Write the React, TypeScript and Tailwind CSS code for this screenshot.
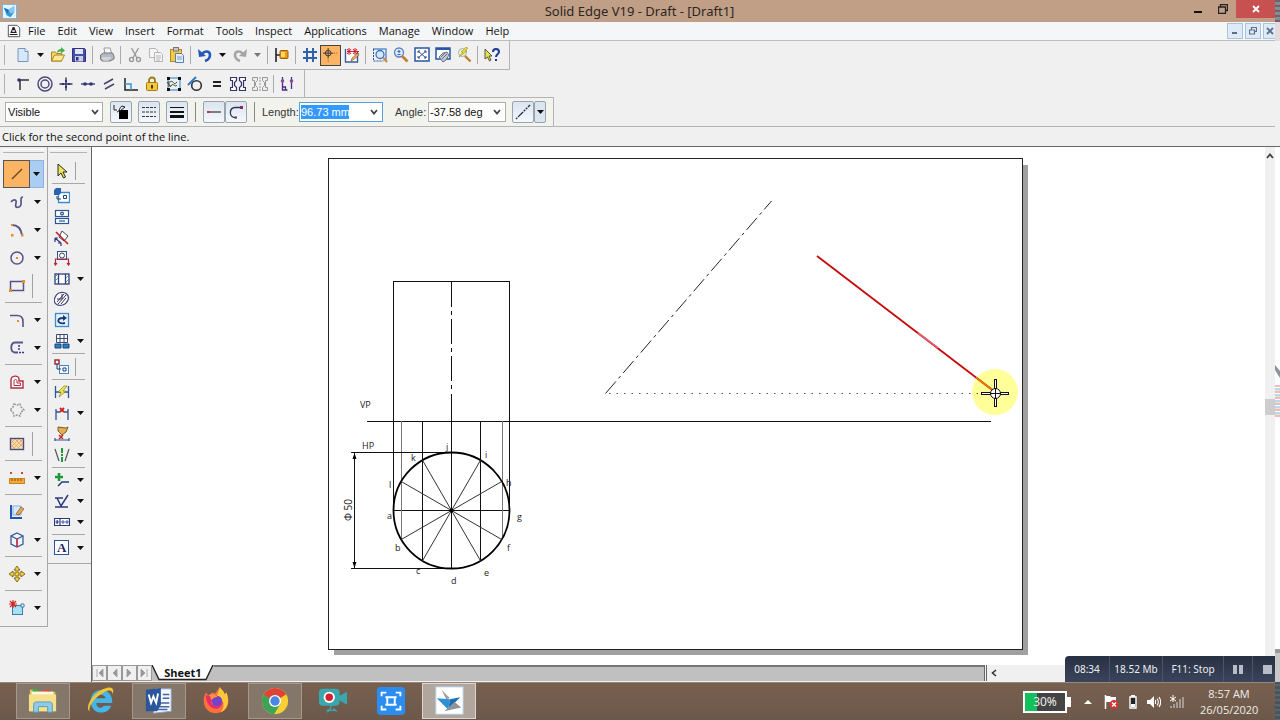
import React from 'react';
import clsx from 'clsx';

const svgs: Record<string, React.ReactNode> = {
  app: (
    <>
      <rect x="0.5" y="0.5" width="15" height="15" fill="#e4f3fc" stroke="#7db4dc" />
      <path d="M2 4l5 2 6-4v7l-4 5-4-2z" fill="#2f9ad8" />
      <path d="M7 6l6-4v7l-4 1z" fill="#8ac9ee" />
      <path d="M2 4l5 2-1 4z" fill="#1873b8" />
    </>
  ),
  draft: (
    <>
      <path d="M1.5 1.5h10l3 3v10h-13z" fill="#fff" stroke="#444" />
      <path d="M3 12h9M4 9.5h7M7.5 4v3M5 9l2-5h1l2 5" fill="none" stroke="#222" strokeWidth="1.3" />
    </>
  ),
  new: (
    <>
      <path d="M3 1.5h7l3 3v10H3z" fill="#d6e8fb" stroke="#7a93b8" />
      <path d="M10 1.5v3h3" fill="#fff" stroke="#7a93b8" />
    </>
  ),
  open: (
    <>
      <path d="M1.5 14V5h4l1 1.5h5V14z" fill="#f7d96b" stroke="#a98425" />
      <path d="M1.5 14l3-6h10l-3 6z" fill="#fde98f" stroke="#a98425" />
      <path d="M7 6c0-3 2-4 4-4V0l4 3.5-4 3v-2c-2 0-3 .5-4 1.5z" fill="#46b04a" />
    </>
  ),
  save: (
    <>
      <path d="M1.5 1.5h12l1 1v12h-13z" fill="#4a4ea8" stroke="#2f3280" />
      <rect x="4" y="2" width="8" height="5" fill="#dfe6f5" />
      <rect x="4" y="9" width="8" height="5.5" fill="#c9d0e4" />
      <rect x="5" y="10" width="2.5" height="3.5" fill="#2f3280" />
    </>
  ),
  print: (
    <>
      <path d="M5 1h6l2 6H6z" fill="#f8f8f8" stroke="#999" />
      <path d="M1.5 8l3-2h9l1.5 3v3l-4 2H3l-1.5-2z" fill="#b4bac4" stroke="#777" />
      <path d="M3 11h9M4 13h6" stroke="#eee" />
    </>
  ),
  cut: (
    <g fill="none" stroke="#9a9a9a" strokeWidth="1.4">
      <path d="M4.5 1l5.5 10M11.5 1L6 11" />
      <circle cx="4.5" cy="12.5" r="2" />
      <circle cx="11.5" cy="12.5" r="2" />
    </g>
  ),
  copy: (
    <g fill="#f7f7f7" stroke="#b5b5b5">
      <path d="M1.5 1.5h6l2 2v7h-8z" />
      <path d="M6.5 5.5h6l2 2v7h-8z" />
      <path d="M8 9h5M8 11h5M8 13h4" />
    </g>
  ),
  paste: (
    <>
      <rect x="1.5" y="2.5" width="11" height="12" fill="#f6c945" stroke="#b58a1c" />
      <rect x="4.5" y="0.5" width="5" height="3.5" fill="#c8c8c8" stroke="#777" />
      <path d="M6.5 6.5h6l2 2v7h-8z" fill="#e4effb" stroke="#5b7fae" />
      <path d="M8 10h5M8 12h5" stroke="#7c9fca" />
    </>
  ),
  undo: (
    <>
      <path d="M5 7c3-4 8-3 8 1 0 3-2 5-5 6" fill="none" stroke="#2358b8" strokeWidth="2.6" />
      <path d="M1 2l1 8 7-1z" fill="#2358b8" />
    </>
  ),
  redo: (
    <>
      <path d="M11 7C8 3 3 4 3 8c0 3 2 5 5 6" fill="none" stroke="#a5a5a5" strokeWidth="2.6" />
      <path d="M15 2l-1 8-7-1z" fill="#a5a5a5" />
    </>
  ),
  part: (
    <>
      <path d="M2 1v14M2 8h5" stroke="#222" strokeWidth="1.6" />
      <rect x="6" y="3.5" width="8" height="8" rx="1" fill="#f09a10" stroke="#9c5f08" />
      <path d="M7 5h4v5H7z" fill="#ffd76a" />
    </>
  ),
  grid: <path d="M5 1v14M11 1v14M1 5h14M1 11h14" stroke="#2f62a8" strokeWidth="2" />,
  snap: (
    <>
      <circle cx="5.5" cy="5.5" r="3" fill="none" stroke="#333" />
      <path d="M5.5 0v11M0 5.5h11" stroke="#333" />
      <path d="M12 5.5h4M5.5 12v4" stroke="#d33" strokeDasharray="1 1" />
    </>
  ),
  relate: (
    <>
      <path d="M1.5 2v13h12V5" fill="#fff" stroke="#39599c" strokeWidth="1.4" />
      <path d="M3 4.5h12M5 1v7M11 1v7M3 2l4 5M7 2L3 7M9 2l4 5M13 2L9 7" stroke="#d02030" />
      <path d="M7 14l1-3 6-5 1 2-6 5z" fill="#f0b060" stroke="#7a4a10" strokeWidth=".6" />
    </>
  ),
  zoomArea: (
    <>
      <path d="M1 2h13v11" fill="none" stroke="#5b8fcf" strokeWidth="1.5" />
      <path d="M1.5 2v12h10" fill="none" stroke="#28509c" strokeDasharray="2 1" />
      <circle cx="8" cy="7.5" r="4" fill="#d3e8fb" stroke="#3d6fb8" strokeWidth="1.3" />
      <path d="M11 10.5l4 4.5" stroke="#c98a4a" strokeWidth="2.2" />
    </>
  ),
  zoom: (
    <>
      <circle cx="6" cy="5.5" r="4.5" fill="#dcebfa" stroke="#5a83be" strokeWidth="1.3" />
      <path d="M6 3v3M4.5 4.5h3M4.5 7.5h3" stroke="#3d62a0" />
      <path d="M9 9l5.5 5.5" stroke="#c08030" strokeWidth="2.6" />
    </>
  ),
  fit: (
    <>
      <rect x="1" y="1" width="14" height="13" fill="#fff" stroke="#2956a5" strokeWidth="1.5" />
      <path d="M4 4l8 7M12 4l-8 7M4 6V4h2M10 4h2v2M4 9v2h2M10 11h2V9" fill="none" stroke="#2c4f8c" />
    </>
  ),
  pan: (
    <>
      <rect x="1" y="1" width="14" height="11" fill="#fff" stroke="#2956a5" strokeWidth="1.5" />
      <path d="M1 2h14" stroke="#2956a5" strokeWidth="2" />
      <path d="M4 10l4-4 4-1 2 3-3 5-3 2z" fill="#c3c7d4" stroke="#4e5674" strokeWidth=".8" />
      <path d="M6 10l4-4M7 12l5-5" stroke="#4e5674" strokeWidth=".8" />
    </>
  ),
  zoomTool: (
    <>
      <circle cx="6.5" cy="5.5" r="4" fill="#f4f4c8" stroke="#9ab0c8" />
      <path d="M9 9l5.5 5.5" stroke="#c08030" strokeWidth="2.4" />
      <path d="M10 0L5 5h2l-4 5 8-6H9l3-3z" fill="#e8d83c" stroke="#8a8420" strokeWidth=".5" />
    </>
  ),
  help: (
    <>
      <path d="M1 2v10l2.5-2 2 4 1.5-1-2-4h3z" fill="#e8e34a" stroke="#333" strokeWidth=".8" />
      <path d="M9 5c0-4 6-4 6 0 0 2-3 2-3 5M12 12v2" fill="none" stroke="#1c3a94" strokeWidth="2" />
    </>
  ),
  connect: (
    <>
      <path d="M5 14V4h9" fill="none" stroke="#333" strokeWidth="1.5" />
      <circle cx="4" cy="4" r="1.8" fill="#33307a" />
    </>
  ),
  concentric: (
    <g fill="none" stroke="#4d4d78" strokeWidth="1.5">
      <circle cx="8" cy="8" r="7" />
      <circle cx="8" cy="8" r="4" />
    </g>
  ),
  horvert: (
    <>
      <path d="M8 1.5v13M1.5 8h13" stroke="#33335c" strokeWidth="1.4" />
      <path d="M7 4h2v2H7zM7 10h2v2H7zM4 7h2v2H4zM10 7h2v2h-2z" fill="#33307a" />
    </>
  ),
  collinear: (
    <>
      <path d="M1 8h14" stroke="#33335c" strokeWidth="1.3" />
      <circle cx="5" cy="8" r="1.8" fill="#33307a" />
      <circle cx="11" cy="8" r="1.8" fill="#33307a" />
    </>
  ),
  parallel: <path d="M3 8l9-5M4 13l9-5" stroke="#44446a" strokeWidth="1.5" />,
  perpendicular: (
    <>
      <path d="M2 2v12h13" fill="none" stroke="#222" strokeWidth="1.5" />
      <path d="M2 8h6v6" fill="none" stroke="#2e9ad0" strokeWidth="1.5" />
    </>
  ),
  lock: (
    <>
      <path d="M5 7V4.5a3 3 0 016 0V7" fill="none" stroke="#9c7a10" strokeWidth="1.8" />
      <rect x="2.5" y="6.5" width="11" height="8" rx="1" fill="#f3c93a" stroke="#a67c10" />
      <rect x="7" y="9" width="2" height="3.5" fill="#4a3808" />
    </>
  ),
  rigid: (
    <>
      <rect x="2" y="2" width="12" height="12" fill="#e6f2fa" stroke="#3a78b8" />
      <path d="M4 6c4-3 3 5 7 0M5 10c2-4 4 2 6-1M1 6l4 5M3 5v6" fill="none" stroke="#4a4020" />
      <path d="M1 1h3v3H1zM12 1h3v3h-3zM1 12h3v3H1zM12 12h3v3h-3z" fill="#111" />
    </>
  ),
  tangent: (
    <>
      <circle cx="9.5" cy="9.5" r="4.8" fill="none" stroke="#333" strokeWidth="1.6" />
      <path d="M1 9l8-8" stroke="#2a7cc0" strokeWidth="2" />
    </>
  ),
  equal: <path d="M4 6h8M4 10h8" stroke="#222" strokeWidth="2" />,
  symmetric: (
    <path
      d="M.5 1.5h6v3l-2 2v3l2 2v3h-6v-3h2v-7h-2zM15.500 1.500h-6v3l2 2v3l-2 2v3h6v-3h-2v-7h2z"
      fill="#fff"
      stroke="#333366"
      strokeWidth="1.2"
    />
  ),
  symmetricAxis: (
    <>
      <path d="M.5 1.5h5v3l-2 2v3l2 2v3h-5v-3h2v-7h-2zM15.5 1.5h-5v3l2 2v3l-2 2v3h5v-3h-2v-7h2z" fill="#eee" stroke="#999" />
      <path d="M8 1v14" stroke="#999" strokeDasharray="2 1" />
    </>
  ),
  relations: (
    <>
      <path d="M3.5 1v13h5M12.5 1v12M3.5 11h3v3" fill="none" stroke="#4b2a80" strokeWidth="1.3" />
      <circle cx="3.5" cy="5" r="1.8" fill="#8c4a9c" />
      <circle cx="12.5" cy="5" r="1.8" fill="#8c4a9c" />
    </>
  ),
  colour: (
    <>
      <path d="M6 6h9v9H6z" fill="#000" />
      <path d="M1 1v5h3M4 8c3 0 2-5 5-6l3 1-5 4" fill="none" stroke="#222" />
    </>
  ),
  dashes: <path d="M1 3.5h14M1 8h14M1 12.5h14" stroke="#333" strokeDasharray="3 1" />,
  widths: (
    <>
      <path d="M1 3.5h14" stroke="#111" />
      <path d="M1 8h14" stroke="#111" strokeWidth="2" />
      <path d="M1 12.5h14" stroke="#111" strokeWidth="3" />
    </>
  ),
  segment: (
    <>
      <path d="M2 8h13" stroke="#333" strokeWidth="1.2" />
      <path d="M1 7h3v2H1z" fill="#c03050" />
    </>
  ),
  arcMode: (
    <>
      <path d="M13 3.5H7C1 4 1 12 6 13.5h2" fill="none" stroke="#33335c" strokeWidth="1.3" />
      <path d="M12 2h3v3h-3zM7 12.5h2v2H7z" fill="#803060" />
    </>
  ),
  projection: <path d="M1 15L15 1" stroke="#1c2d50" strokeWidth="1.3" strokeDasharray="2 1 7 1 2 1" />,
  line: <path d="M3 13L13 3" stroke="#6b4a1c" strokeWidth="1.5" />,
  curve: <path d="M2 8c2-3 6-3 5 1s0 5 3 4 2-4 2-7 1-3 2-3" fill="none" stroke="#55558c" strokeWidth="1.7" />,
  arc: (
    <>
      <path d="M3 3c6 0 9 4 10 10" fill="none" stroke="#55558c" strokeWidth="1.8" />
      <path d="M2 2h2v2H2zM12 12h2.5v2.5H12zM2 12h2.5v2.5H2z" fill="#e08c30" />
    </>
  ),
  circle: (
    <>
      <circle cx="8" cy="8" r="6" fill="none" stroke="#55558c" strokeWidth="1.5" />
      <path d="M7 7h2v2H7z" fill="#e08c30" />
    </>
  ),
  rectangle: (
    <>
      <rect x="1.5" y="3.5" width="13" height="9" fill="none" stroke="#55558c" strokeWidth="1.5" />
      <path d="M13 2h3v3h-3zM0 11h3v3H0z" fill="#e08c30" />
    </>
  ),
  fillet: (
    <>
      <path d="M1 3.5h7c4 0 6 2 6 6V15" fill="none" stroke="#55558c" strokeWidth="1.6" />
      <path d="M8 8h2v2H8z" fill="#e08c30" />
    </>
  ),
  extend: (
    <>
      <path d="M14 2.5H6C1 3 1 12 6 12.5h3" fill="none" stroke="#55558c" strokeWidth="1.8" />
      <path d="M10 12.5h5M10 5v6" stroke="#3a3a8a" strokeWidth="1.5" strokeDasharray="2 1" />
    </>
  ),
  offset: (
    <>
      <path d="M2 14V6c0-5 8-5 8-1v2h4v7z" fill="#fff" stroke="#b03040" strokeWidth="1.4" />
      <path d="M5 11.5V7c0-2 3-2 3 0v2h3.5v2.5z" fill="none" stroke="#b03040" />
    </>
  ),
  symmetricOffset: (
    <path
      d="M5 2l3 1 3-1 1 3 3 3-3 2-1 4-3-1-3 1-1-4-3-2 3-3z"
      fill="none"
      stroke="#999"
      strokeWidth="1.5"
      strokeDasharray="2 1"
    />
  ),
  fill: (
    <>
      <rect x="1.5" y="2.5" width="13" height="11" fill="#f9dcb4" stroke="#4a4a80" strokeWidth="1.4" />
      <path d="M2 7l4-4M2 11l8-8M4 13L14 3M8 13l6-6M2 9l4 4M2 4l9 9M6 3l8 8M10 3l4 4" stroke="#e0a258" strokeWidth=".8" />
    </>
  ),
  measure: (
    <>
      <rect x="0.5" y="8.5" width="15" height="5" fill="#f2a93c" stroke="#c98420" />
      <path d="M3 9v2M6 9v2M9 9v2M12 9v2" stroke="#7a4508" />
      <path d="M1 2h2v2H1zM12 2h2v2h-2z" fill="#cc4444" />
    </>
  ),
  properties: (
    <>
      <path d="M2 1v13h11" fill="none" stroke="#1e58b0" strokeWidth="2" />
      <path d="M4 2h8v9H4z" fill="#d7e9fa" stroke="#88aee0" />
      <path d="M7 10l5-7 3 2-5 6z" fill="#e8a850" stroke="#644018" strokeWidth=".6" />
    </>
  ),
  view3d: (
    <>
      <path d="M8 1l6 3v8l-6 3-6-3V4z" fill="#eef4fc" stroke="#3a5a94" strokeWidth="1.3" />
      <path d="M2 4l6 3 6-3" fill="none" stroke="#3a5a94" strokeWidth="1.3" />
      <path d="M8 7v8" stroke="#c83040" strokeWidth="1.8" />
    </>
  ),
  move: (
    <path d="M8 0l3 4H9v3h3V5l4 3-4 3V9H9v3h2l-3 4-3-4h2V9H4v2L0 8l4-3v2h3V4H5z" fill="#f0cf3c" stroke="#6a5410" strokeWidth=".8" />
  ),
  block: (
    <>
      <rect x="3.5" y="5.5" width="10" height="9" fill="#a8dff2" stroke="#3c7ca8" />
      <path d="M4 0v8M0 4h8M1 1l6 6M7 1L1 7" stroke="#d02828" strokeWidth="1.2" />
      <path d="M12 4h3v3h-3z" fill="#fff" stroke="#3c7ca8" />
    </>
  ),
  select: <path d="M4 1v12l3-3 2.5 5 2-1L9 9h4z" fill="#e9e45a" stroke="#2a2a20" />,
  viewWizard: (
    <>
      <path d="M4.5 4.5h11v10h-11z" fill="#fff" stroke="#3a8ccc" strokeWidth="1.3" />
      <path d="M0 2l2-2h5v5L5 7H0z" fill="#2c62ac" />
      <path d="M3 8v3h4M9.5 7.5h3v3h-3z" fill="none" stroke="#223c70" />
    </>
  ),
  principal: (
    <g fill="#fff" stroke="#2d5496" strokeWidth="1.2">
      <rect x="1.5" y="1.5" width="13" height="6" />
      <rect x="1.5" y="9.5" width="13" height="5" />
      <circle cx="8" cy="4.5" r="1.4" />
      <path d="M5 12h6" />
    </g>
  ),
  auxiliary: (
    <>
      <path d="M8 1l6 5-4 5-5-4z" fill="#fff" stroke="#445" />
      <path d="M2 2l12 12" stroke="#c02020" strokeWidth="1.6" />
      <path d="M1 8l6 5M1 8v4M1 8h3M7 13v3M7 13H4" stroke="#2a3a80" strokeWidth="1.2" />
    </>
  ),
  cutting: (
    <>
      <rect x="3.5" y="1.5" width="9" height="8" fill="#fff" stroke="#2d5496" />
      <circle cx="8" cy="5.5" r="2.5" fill="none" stroke="#445" />
      <path d="M1.5 15V9h13v6M0 13l1.5 2L3 13M13 13l1.5 2 1.5-2" fill="none" stroke="#b02838" strokeWidth="1.2" />
    </>
  ),
  section: (
    <>
      <rect x="1" y="3" width="14" height="10" fill="#fff" stroke="#2e3f78" strokeWidth="1.3" />
      <path d="M4.5 3v10M11.5 3v10" stroke="#2e3f78" strokeWidth="1.3" />
      <path d="M1 6l3-3M1 10l3-3M12 7l3-3M12 11l3-3" stroke="#2e8888" strokeWidth=".8" />
    </>
  ),
  broken: (
    <>
      <path d="M5 2c6-2 11 2 9 7s-8 7-12 4 0-10 3-11z" fill="#fff" stroke="#4a4a8c" strokeWidth="1.3" />
      <path d="M3 8h5V3M3 11l7-8M4 13l8-9M7 13l5-6" fill="none" stroke="#33335c" />
    </>
  ),
  update: (
    <>
      <rect x="1.5" y="1.5" width="13" height="13" fill="#e4f3fc" stroke="#3a8ccc" strokeWidth="1.3" />
      <path d="M11 11c-5 1-8-1-6-4 1-1 3-1 5-1" fill="none" stroke="#1d3a70" strokeWidth="1.8" />
      <path d="M9 3l4 3-4 3z" fill="#1d3a70" />
    </>
  ),
  table: (
    <>
      <path d="M2.5 1.5h11v8h-11zM6 1.5v8M10 1.5v8M2.5 5.5h11" fill="#fff" stroke="#3b4a70" />
      <path d="M1 11h6v4H1zM9 11h6v4H9z" fill="#2c7cc0" stroke="#174a80" />
    </>
  ),
  partView: (
    <>
      <rect x="5.5" y="6.5" width="9" height="8" fill="#fff" stroke="#3a8ccc" />
      <rect x="1" y="1" width="4" height="4" fill="#fff" stroke="#90202c" strokeWidth="1.4" />
      <path d="M3 5v5h4M9 9h3v3H9z" fill="none" stroke="#223c70" />
    </>
  ),
  smartDim: (
    <>
      <path d="M1.5 2v12M14.5 2v12M2 8h12" stroke="#2d5496" strokeWidth="1.3" />
      <path d="M10 2L4 8h3l-2 5 7-6H9l4-5z" fill="#f0e548" stroke="#77701a" strokeWidth=".6" />
    </>
  ),
  distance: (
    <>
      <path d="M2 4v11M14 4v11M2 7h4M10 7h4" stroke="#2d5496" strokeWidth="1.3" />
      <path d="M6 3l4 4M10 3L6 7" stroke="#d02020" strokeWidth="1.8" />
    </>
  ),
  attach: (
    <>
      <path d="M4 1l8 1 2-1-2 5-4 3-4-4z" fill="#e0b050" stroke="#5a4010" strokeWidth=".8" />
      <path d="M5 9l4 4M9 9l-4 4" stroke="#d02020" strokeWidth="1.5" />
      <path d="M1 14h14M1 12v3M15 12v3" stroke="#2d5496" strokeWidth="1.2" />
    </>
  ),
  axis: (
    <>
      <path d="M1 2l4 12M15 2l-4 12" stroke="#555" strokeWidth="1.2" />
      <path d="M8 1v14" stroke="#1c9a38" strokeWidth="2" strokeDasharray="5 1 2 1" />
    </>
  ),
  annotation: (
    <>
      <path d="M5 1v8M1 5h8" stroke="#1c9a38" strokeWidth="2.6" />
      <path d="M4 14l4-4h7" fill="none" stroke="#2a3a80" strokeWidth="1.5" />
    </>
  ),
  surface: <path d="M1 5h8M3 5l4 8 7-11M1 14h13" fill="none" stroke="#2a3a80" strokeWidth="1.5" />,
  frame: (
    <g fill="#fff" stroke="#2a3a80" strokeWidth="1.2">
      <path d="M0.5 4.5h15v7h-15zM6 4.5v7M3.2 6v4M1.5 8h3.5" />
      <path d="M8 7h2v2H8zM12 7h2v2h-2z" strokeWidth=".8" />
    </g>
  ),
};

function Icon({ name, className }: { name: string; className?: string }) {
  return (
    <svg viewBox="0 0 16 16" className={clsx('shrink-0', className || 'size-4')} aria-hidden="true">
      {svgs[name]}
    </svg>
  );
}

function Caret({ muted }: { muted?: boolean }) {
  return (
    <svg viewBox="0 0 7 4" className="h-1 w-[7px]" aria-hidden="true">
      <path d="M0 0h7L3.5 4z" fill={muted ? '#777' : '#111'} />
    </svg>
  );
}

function Chevron() {
  return (
    <svg viewBox="0 0 8 6" className="h-1.5 w-2 shrink-0" aria-hidden="true">
      <path d="M1 1l3 3.5L7 1" fill="none" stroke="#444" strokeWidth="1.8" />
    </svg>
  );
}

// "|" is a separator, "v" a drop-down arrow
const standardBar = [
  'new', 'v', 'open', 'save', '|', 'print', '|', 'cut', 'copy', 'paste', '|', 'undo', 'v', 'redo', 'v', '|', 'part', '|',
  'grid', 'snap', 'relate', '|', 'zoomArea', 'zoom', 'fit', 'pan', 'zoomTool', '|', 'help',
];

const relationBar = [
  'connect', 'concentric', 'horvert', 'collinear', 'parallel', 'perpendicular', 'lock', 'rigid', 'tangent', 'equal',
  'symmetric', 'symmetricAxis',
];

const menus = ['File', 'Edit', 'View', 'Insert', 'Format', 'Tools', 'Inspect', 'Applications', 'Manage', 'Window', 'Help'];

type Tool = { name: string; drop?: boolean; active?: boolean; edge?: boolean };

const drawTools: Tool[][] = [
  [
    { name: 'line', drop: true, active: true },
    { name: 'curve', drop: true },
    { name: 'arc', drop: true },
    { name: 'circle', drop: true },
    { name: 'rectangle', edge: true },
  ],
  [{ name: 'fillet', drop: true }, { name: 'extend', drop: true }],
  [{ name: 'offset', drop: true }, { name: 'symmetricOffset', drop: true }],
  [{ name: 'fill', edge: true }],
  [{ name: 'measure', drop: true }],
  [{ name: 'properties' }, { name: 'view3d', drop: true }],
  [{ name: 'move', drop: true }],
  [{ name: 'block', drop: true }],
];

const viewTools: { height: string; tools: Tool[] }[] = [
  { height: 'h-[21px]', tools: [{ name: 'select', edge: true }] },
  {
    height: 'h-[165px]',
    tools: [
      { name: 'viewWizard' },
      { name: 'principal' },
      { name: 'auxiliary' },
      { name: 'cutting' },
      { name: 'section', drop: true },
      { name: 'broken' },
      { name: 'update' },
      { name: 'table', drop: true },
    ],
  },
  { height: 'h-[21px]', tools: [{ name: 'partView', edge: true }] },
  {
    height: 'h-[83px]',
    tools: [{ name: 'smartDim' }, { name: 'distance', drop: true }, { name: 'attach' }, { name: 'axis', drop: true }],
  },
  {
    height: 'h-[62px]',
    tools: [{ name: 'annotation', drop: true }, { name: 'surface', drop: true }, { name: 'frame', drop: true }],
  },
  { height: 'h-[21px]', tools: [{ name: 'text', drop: true }] },
];

function TitleBar() {
  return (
    <header className="flex h-[22px] shrink-0 items-center bg-[#c19f86]">
      <div className="flex w-[93px] pl-0.5">
        <Icon name="app" className="size-[15px]" />
      </div>
      <h1 className="flex-1 text-center font-['Noto_Sans',sans-serif] text-[13px] leading-5 text-[#2c2622]">
        Solid Edge V19 - Draft - [Draft1]
      </h1>
      <div className="flex h-full w-[89px] items-start">
        <button aria-label="Minimize" className="flex h-[18px] w-6 items-center justify-center">
          <svg viewBox="0 0 8 8" className="size-2"><path d="M0 6h8v2H0z" fill="#111" /></svg>
        </button>
        <button aria-label="Restore" className="flex h-[18px] w-[26px] items-center justify-center">
          <svg viewBox="0 0 10 10" className="size-2.5">
            <path d="M2.5 2.5V.5h7v6h-2M.5 3h7v6.5h-7z" fill="none" stroke="#222" strokeWidth="1.3" />
          </svg>
        </button>
        <button aria-label="Close" className="flex h-[18px] flex-1 items-center justify-center bg-[#c75050]">
          <svg viewBox="0 0 8 8" className="size-2"><path d="M1 1l6 6M7 1L1 7" stroke="#fff" strokeWidth="1.8" /></svg>
        </button>
      </div>
    </header>
  );
}

function MenuBar() {
  const box = 'flex h-4 items-center justify-center border border-[#a9c3de] bg-[#dfeaf7]';
  return (
    <nav className="flex h-[19px] shrink-0 items-center border-b border-[#bdbdbd] bg-[#f5f6f7] pl-[7px]">
      <Icon name="draft" className="mr-[7px] size-[14px]" />
      <div className="flex flex-1 gap-3 text-[11px]">
        {menus.map((m) => (
          <button key={m} className="leading-4">{m}</button>
        ))}
      </div>
      <div className="flex gap-0.5">
        <button aria-label="Minimize sheet" className={clsx(box, 'w-4')}>
          <svg viewBox="0 0 8 8" className="size-2"><path d="M1 5h5v2H1z" fill="#5a6f8c" /></svg>
        </button>
        <button aria-label="Restore sheet" className={clsx(box, 'w-4')}>
          <svg viewBox="0 0 8 8" className="size-2">
            <path d="M2.5 2.5V.5h5v4h-2M.5 3h5v4h-5z" fill="none" stroke="#5a6f8c" strokeWidth="1.2" />
          </svg>
        </button>
        <button aria-label="Close sheet" className={clsx(box, 'w-3 border-r-0')}>
          <svg viewBox="0 0 8 8" className="size-2"><path d="M1 1l6 6M7 1L1 7" stroke="#5a6f8c" strokeWidth="1.8" /></svg>
        </button>
      </div>
    </nav>
  );
}

function StandardBar() {
  return (
    <div className="flex h-[29px] w-[510px] shrink-0 items-center border-r border-b border-[#b4b4b4] pl-1">
      <div className="mr-1.5 h-5 w-0.5 border-l border-[#b0b0b0]" />
      {standardBar.map((item, i) => {
        if (item === '|') return <div key={i} className="mx-[3px] h-[18px] w-px bg-[#aaa]" />;
        if (item === 'v')
          return (
            <button key={i} aria-label="More" className="flex h-5 w-3.5 items-center justify-center">
              <Caret muted={standardBar[i - 1] === 'redo'} />
            </button>
          );
        return (
          <button
            key={i}
            aria-label={item}
            className={clsx(
              'flex h-[21px] w-[21px] items-center justify-center',
              item === 'snap' && 'border border-[#444] bg-[#fbb463]',
            )}
          >
            <Icon name={item} className={item === 'snap' ? 'size-[15px]' : 'size-4'} />
          </button>
        );
      })}
    </div>
  );
}

function RelationBar() {
  return (
    <div className="flex h-[27px] w-[305px] shrink-0 items-center border-r border-[#b4b4b4] pl-1">
      <div className="mr-[9px] h-5 w-0.5 border-l border-[#b0b0b0]" />
      <div className="flex w-[253px] justify-between">
        {relationBar.map((name) => (
          <button key={name} aria-label={name}>
            <Icon name={name} className="size-4" />
          </button>
        ))}
      </div>
      <div className="mx-[5px] h-[18px] w-px bg-[#aaa]" />
      <button aria-label="relations">
        <Icon name="relations" className="size-4" />
      </button>
    </div>
  );
}

function RibbonBar() {
  const btn =
    'flex h-[22px] w-[22px] items-center justify-center rounded-xs border border-[#9aa4b0] bg-linear-to-b from-[#dbe5ef] to-[#f4f8fc]';
  const combo = 'flex h-5 items-center justify-between border bg-white pr-1 pl-px';
  return (
    <div className="flex h-[29px] w-[554px] shrink-0 items-center border-t border-r border-[#b4b4b4] bg-[#f3f3ee] pl-[5px] font-['Liberation_Sans',Arial,sans-serif] text-[11px]">
      <div className="relative mr-[7px] flex w-[98px] items-center">
        <select aria-label="Line style" className="h-5 w-full appearance-none border border-[#adadad] bg-white pl-0.5">
          <option>Visible</option>
        </select>
        <span className="pointer-events-none absolute right-1"><Chevron /></span>
      </div>
      <div className="flex gap-[6px]">
        <button aria-label="Line colour" className={btn}><Icon name="colour" /></button>
        <button aria-label="Line type" className={btn}><Icon name="dashes" /></button>
        <button aria-label="Line width" className={btn}><Icon name="widths" /></button>
      </div>
      <div className="mx-[7px] h-5 w-px bg-[#888]" />
      <button aria-label="Line mode" className={btn}><Icon name="segment" /></button>
      <button aria-label="Arc mode" className={btn}><Icon name="arcMode" /></button>
      <div className="mx-[7px] h-5 w-px bg-[#888]" />
      <label htmlFor="length" className="w-[37px] text-[#333]">Length:</label>
      <div className={clsx(combo, 'w-[84px] border-[#56a0dc]')}>
        <input id="length" defaultValue="96.73 mm" className="h-3.5 w-12 bg-[#3399ff] text-white" />
        <Chevron />
      </div>
      <label htmlFor="angle" className="ml-3 w-[33px] text-[#333]">Angle:</label>
      <div className={clsx(combo, 'w-[78px] border-[#adadad]')}>
        <input id="angle" defaultValue="-37.58 deg" className="h-3.5 w-14 bg-white" />
        <Chevron />
      </div>
      <button aria-label="Projection line" className={clsx(btn, 'ml-1.5')}><Icon name="projection" /></button>
      <button aria-label="Projection options" className="flex h-[22px] w-3 items-center justify-center rounded-xs border border-[#9aa4b0] bg-[#dbe5ef]">
        <Caret />
      </button>
    </div>
  );
}

function Grip() {
  return <div className="h-1 border-t border-b border-t-white border-b-[#b4b4b4]" />;
}

function DrawTools() {
  return (
    <aside className="h-fit w-12 shrink-0 border-r border-b border-[#a8a8a8] pt-0.5 pr-[3px] pb-1 pl-[3px]">
      <Grip />
      <div className="mt-[7px] flex flex-col">
        {drawTools.map((group, i) => (
          <div key={i}>
            {i > 0 && <div className="mx-0.5 my-[2px] h-0.5 border-t border-[#a8a8a8]" />}
            {group.map((t) => (
              <div key={t.name} className="flex h-7 items-center">
                <button
                  aria-label={t.name}
                  className={clsx('flex h-full w-[27px] items-center justify-center', t.active && 'border border-[#555] bg-[#fbb463]')}
                >
                  <Icon name={t.name} className="size-4" />
                </button>
                {t.drop && (
                  <button
                    aria-label={t.name + ' options'}
                    className={clsx('flex h-full w-3.5 items-center justify-center', t.active && 'border border-l-0 border-[#8fb2dc] bg-[#a9cdf3]')}
                  >
                    <Caret />
                  </button>
                )}
                {t.edge && <div className="ml-0.5 h-6 w-px bg-[#a0a0a0]" />}
              </div>
            ))}
          </div>
        ))}
      </div>
    </aside>
  );
}

function ViewTools() {
  return (
    <aside className="h-fit w-[43px] shrink-0 border-b border-[#a8a8a8] pt-0.5 pr-1 pb-[5px] pl-0.5">
      <Grip />
      <div className="mt-[7px]">
        {viewTools.map((group, i) => (
          <div key={i}>
            {i > 0 && <div className="mx-0.5 my-[2px] h-px bg-[#a8a8a8]" />}
            <div className={clsx('flex flex-col', group.height)}>
              {group.tools.map((t) => (
                <div key={t.name} className="flex flex-1 items-center">
                  <button aria-label={t.name} className="flex w-6 items-center justify-center">
                    {t.name === 'text' ? (
                      <span className="flex size-[15px] items-center justify-center border border-[#2d5496] bg-white font-['Liberation_Serif',serif] text-[13px] leading-3 font-bold text-[#1a2a5c]">
                        A
                      </span>
                    ) : (
                      <Icon name={t.name} className="size-4" />
                    )}
                  </button>
                  {t.drop && (
                    <button aria-label={t.name + ' options'} className="flex w-3.5 items-center justify-center">
                      <Caret />
                    </button>
                  )}
                  {t.edge && <div className="ml-px h-[18px] w-px bg-[#a0a0a0]" />}
                </div>
              ))}
            </div>
          </div>
        ))}
      </div>
    </aside>
  );
}

const labels: [string, number, number][] = [
  ['VP', 360, 408],
  ['HP', 362, 449],
  ['k', 411, 461],
  ['j', 446, 450],
  ['i', 485, 458],
  ['h', 506, 486],
  ['l', 389, 488],
  ['a', 387, 519],
  ['g', 517, 520],
  ['b', 395, 551],
  ['f', 507, 551],
  ['c', 416, 574],
  ['e', 484, 576],
  ['d', 451, 584],
];

function Drawing() {
  const cx = 451.5;
  const cy = 510.5;
  const r = 58;
  const spokes = [30, 60, 120, 150];
  return (
    <svg className="block h-full w-full" role="img" aria-label="Draft sheet">
      <g transform="translate(-92 -148)">
        <path d="M334 650h689V165h5v490H334z" fill="#a0a0a0" />
        <rect x="328.5" y="158.5" width="694" height="491" fill="#fff" stroke="#222" />

        <g fill="none" stroke="#111" shapeRendering="crispEdges">
          <path d="M393.5 510V281.5h116V510M367 421.5h624" />
          <path d="M451.5 282v108" strokeDasharray="25 4 4 4" />
          <path d="M451.5 394v175M393 510.5h116M422.5 421v140M480.5 421v140" />
          <path d="M401.5 421v118M502.5 421v118" stroke="#777" />
          <path d="M351 452.5h100M351 568.5h100M354.5 453v115" />
        </g>
        <circle cx={cx} cy={cy} r={r} fill="none" stroke="#000" strokeWidth="1.8" />
        {spokes.map((deg) => {
          const dx = r * Math.cos((deg * Math.PI) / 180);
          const dy = r * Math.sin((deg * Math.PI) / 180);
          return <line key={deg} x1={cx - dx} y1={cy - dy} x2={cx + dx} y2={cy + dy} stroke="#333" />;
        })}
        <circle cx={cx} cy={cy} r="2" />
        <path d="M354.5 453l2 6h-4zM354.5 568l2-6h-4z" />

        <g className="font-['Open_Sans',sans-serif] text-[9px]" fill="#222">
          {labels.map(([t, x, y]) => (
            <text key={t} x={x} y={y}>{t}</text>
          ))}
          <text transform="translate(352 521) rotate(-90)" className="text-[10px]">Φ 50</text>
        </g>

        <path d="M605.5 393.5L771.5 201" stroke="#222" strokeDasharray="16 4 3 4" />
        <circle cx="995" cy="392" r="23" fill="#ffff99" />
        <path d="M609 393.5h375" stroke="#555" strokeDasharray="1.5 6" />
        <path d="M817 256l178 136" stroke="#c80a0a" strokeWidth="1.8" />
        <path d="M918 333l20 15" stroke="#e06070" strokeWidth="1.8" />
        <path d="M976 377.5l17 13" stroke="#e07800" strokeWidth="2" />
        <g fill="none" stroke="#111">
          <path d="M981 393.5h28M995.5 379v28" strokeWidth="3" />
          <circle cx="995.5" cy="393.5" r="5" fill="#fff" />
          <path d="M982 393.5h26M995.5 380v26" stroke="#fff" />
          <path d="M990 393.5h11M995.5 388v11" />
        </g>
      </g>
    </svg>
  );
}

const navPaths = ['M3 1v8M9 1L5 5l4 4z', 'M8 1L4 5l4 4z', 'M3 1l4 4-4 4z', 'M2 1l4 4-4 4zM8 1v8'];

function SheetTabs() {
  return (
    <div className="flex h-4 shrink-0">
      {navPaths.map((d) => (
        <button key={d} aria-label="Scroll sheets" className="flex w-[15px] shrink-0 items-center justify-center border border-[#999] bg-[#f0f0f0]">
          <svg viewBox="0 0 11 10" className="h-2.5 w-[11px]">
            <path d={d} fill="#999" />
            <path d={d} fill="none" stroke="#999" strokeWidth=".8" />
          </svg>
        </button>
      ))}
      <div className="relative w-[62px] shrink-0 bg-[#c0c0c0]">
        <svg viewBox="0 0 62 16" className="absolute inset-0 size-full" aria-hidden="true">
          <path d="M0 0l7 15h47l7-15z" fill="#fff" />
          <path d="M0 0l7 14.5h47L61 0" fill="none" stroke="#222" strokeWidth="1.4" />
        </svg>
        <button className="relative block h-4 w-full text-center text-[11px] leading-4 font-bold">Sheet1</button>
      </div>
      <div className="flex-1 border-t-2 border-[#777] bg-[#c0c0c0]" />
      <div className="w-[3px] border-x border-[#666] bg-[#f0f0f0]" />
      <div className="flex w-[288px] items-center bg-[#f0f0f0] pl-1">
        <svg viewBox="0 0 6 8" className="h-2 w-1.5"><path d="M5 1L1.5 4 5 7" fill="none" stroke="#333" strokeWidth="1.6" /></svg>
      </div>
    </div>
  );
}

function Recorder() {
  const cell = 'flex items-center justify-center border-l border-[#4b5468]';
  return (
    <div className="absolute right-0 bottom-[38px] flex h-[26px] w-[210px] rounded-tl-sm bg-linear-to-b from-[#283044] to-[#3a455c] font-['Noto_Sans',sans-serif] text-[10px] text-[#eee]">
      <span className="flex w-[44px] items-center justify-center">08:34</span>
      <span className={clsx(cell, 'w-[53px]')}>18.52 Mb</span>
      <button className={clsx(cell, 'w-[61px]')}>F11: Stop</button>
      <button aria-label="Pause" className={clsx(cell, 'w-[29px] gap-0.5')}>
        <span className="h-[9px] w-1 bg-[#b8bcc6]" />
        <span className="h-[9px] w-1 bg-[#b8bcc6]" />
      </button>
      <button aria-label="Stop" className={clsx(cell, 'flex-1')}>
        <span className="ml-1.5 size-[9px] bg-[#b8bcc6]" />
      </button>
    </div>
  );
}

const apps: { name: string; open?: boolean; art: React.ReactNode }[] = [
  {
    name: 'File Explorer',
    open: true,
    art: (
      <>
        <path d="M2 4h7l2 2h18v21H2z" fill="#e6c65c" />
        <path d="M5 3h5v4H5z" fill="#3fae49" />
        <path d="M17 4h7v3h-7z" fill="#d8533c" />
        <path d="M4 6h23v6H4z" fill="#fbf6dc" />
        <path d="M1 9h29v18H1z" fill="#f6e08c" />
        <path d="M6 28v-8c0-2 1-3 3-3h14c2 0 3 1 3 3v8h-5v-6H11v6z" fill="#8fcbe8" stroke="#4f9cc4" />
      </>
    ),
  },
  {
    name: 'Internet Explorer',
    art: (
      <>
        <path d="M7 18h21c1-18-23-18-23-2 0 15 18 16 22 5h-8c-3 4-8 2-8-3z" fill="#45b5ea" />
        <path d="M11 13h10c-1-5-9-5-10 0z" fill="#6f5a4b" />
        <path d="M4 27c-6-3 3-22 18-25 8-2 8 4 6 7 1-4-3-6-9-2C9 12 2 22 4 27z" fill="#f5c732" />
      </>
    ),
  },
  {
    name: 'Word',
    open: true,
    art: (
      <>
        <path d="M12 3h17v24l-19 2z" fill="#f4f7fc" stroke="#8ea3c8" />
        <path d="M20 9h7M20 13h7M13 18h14M13 22h14M13 25h12" stroke="#4467a4" strokeWidth="1.6" />
        <path d="M2 4l16-2v18l-4 7H2z" fill="#2b579a" />
        <path d="M5 9l2.5 9L10 11l3 7 2-10" fill="none" stroke="#fff" strokeWidth="2" />
      </>
    ),
  },
  {
    name: 'Firefox',
    art: (
      <>
        <path d="M4 7l3 3 4-3 3 1 5-7c1 3 5 4 5 8l2-2c6 13-1 22-11 22C3 29-1 17 4 7z" fill="#ff7139" />
        <path d="M19 1c1 3 5 4 5 8l2-2c4 10 1 18-6 21 5-6 4-14-4-18z" fill="#ffc73a" />
        <path d="M4 10c5-1 7 4 12 2-2 2-5 2-6 5 1 5 9 5 12 0-1 11-17 10-18-7z" fill="#e3306d" />
        <circle cx="16" cy="16" r="5.5" fill="#7542c8" />
        <path d="M8 9c3 0 7 0 9 3-3-1-5 1-7 3z" fill="#ff9640" />
      </>
    ),
  },
  {
    name: 'Chrome',
    open: true,
    art: (
      <>
        <circle cx="16" cy="16" r="14" fill="#f9cf33" />
        <path d="M16 16L3.9 9A14 14 0 0015 30l7-11z" fill="#3da456" />
        <path d="M16 16L3.9 9A14 14 0 0128.1 9L22 10z" fill="#dd4437" />
        <path d="M4 9h24L16 16z" fill="#dd4437" />
        <circle cx="16" cy="16" r="6.5" fill="#fff" />
        <circle cx="16" cy="16" r="5" fill="#4a86e8" />
      </>
    ),
  },
  {
    name: 'Screen recorder',
    art: (
      <>
        <rect x="1" y="3" width="22" height="18" rx="4" fill="#3aa6ae" />
        <path d="M22 11l9-5v14l-9-5z" fill="#3aa6ae" />
        <path d="M14 20c0 6-3 6-5 6h10M13 25l-3 3M16 24l4 3" fill="none" stroke="#3aa6ae" strokeWidth="1.5" />
        <circle cx="12" cy="12" r="6" fill="#fff" />
        <circle cx="12" cy="12" r="4" fill="#d81f2c" />
      </>
    ),
  },
  {
    name: 'Screen capture',
    art: (
      <>
        <rect x="1" y="1" width="30" height="30" rx="4" fill="#2b8df0" />
        <path d="M6 11V7h5M21 7h5v4M6 21v4h5M21 25h5v-4M10 12h12M10 20h12M12 11v10M20 11v10" fill="none" stroke="#fff" strokeWidth="2" />
      </>
    ),
  },
  {
    name: 'Solid Edge',
    open: true,
    art: (
      <>
        <rect x="2" y="1" width="29" height="29" fill="#fff" stroke="#b5d6ee" />
        <path d="M8 4l9 9-4 1z" fill="#9da1a5" />
        <path d="M3 13l14 1-2 11z" fill="#2f8fd4" />
        <path d="M17 14l11-2-13 13z" fill="#1b6fb5" />
        <path d="M22 17l7 6-18 4z" fill="#8f9499" />
      </>
    ),
  },
];

function Taskbar() {
  return (
    <footer className="flex h-[38px] shrink-0 items-center border-t border-[#9a8676] bg-linear-to-b from-[#78604f] to-[#6c584a] pl-4">
      <div className="flex h-full flex-1 gap-1">
        {apps.map((a, i) => (
          <button
            key={a.name}
            aria-label={a.name}
            className={clsx(
              'flex h-9 w-[54px] items-center justify-center border',
              a.open ? 'border-[#a5988d] bg-[#85766a]' : 'border-transparent',
              i === apps.length - 1 && 'border-[#dcd5cf] bg-[#b0a69d]',
            )}
          >
            <svg viewBox="0 0 32 32" className="size-[30px]">{a.art}</svg>
          </button>
        ))}
      </div>
      <div className="flex h-full items-center text-[#f0ece8]">
        <div className="flex h-[22px] w-11 items-center justify-center border-2 border-white bg-linear-to-r from-[#12c05c] from-30% to-[#444] to-30% font-['Noto_Sans',sans-serif] text-xs">
          30%
        </div>
        <div className="h-2.5 w-1 bg-white" />
        <svg viewBox="0 0 8 4" className="mr-3 ml-[13px] h-1 w-2"><path d="M0 4l4-4 4 4z" fill="#fff" /></svg>
        <svg viewBox="0 0 14 14" className="mr-2.5 size-3.5">
          <path d="M1.5 0v14" stroke="#fff" strokeWidth="1.5" />
          <path d="M2 1h4l1 1h5v6H7L6 7H2z" fill="#fff" />
          <circle cx="10" cy="9.5" r="4.5" fill="#d83030" />
          <path d="M8 7.5l4 4M12 7.5l-4 4" stroke="#fff" strokeWidth="1.4" />
        </svg>
        <svg viewBox="0 0 10 14" className="mr-2 h-3.5 w-2.5">
          <path d="M3 0h4v2H3z" fill="#fff" />
          <path d="M2 2h6v11H2z" fill="#222" stroke="#fff" strokeWidth="1.4" />
          <path d="M3 9h4v3H3z" fill="#fff" />
        </svg>
        <svg viewBox="0 0 15 14" className="mr-2 h-3.5 w-[15px]">
          <path d="M1 5h3l4-4v12L4 9H1z" fill="#fff" />
          <path d="M9.5 5v4M11 3.5c1.5 2 1.5 5 0 7M13 2c2 3 2 7 0 10" fill="none" stroke="#fff" strokeWidth="1.1" />
        </svg>
        <svg viewBox="0 0 15 14" className="mr-4 h-3.5 w-[15px]">
          <path d="M1 11h2v2H1zM4 9h2v4H4zM7 7h2v6H7zM10 4h2v9h-2zM13 2h2v11h-2z" fill="#a39a92" />
          <path d="M4 0v7M1 2l6 4M7 2L1 6" stroke="#fff" />
        </svg>
        <div className="mr-[17px] w-[58px] text-center text-[11px] leading-4 whitespace-nowrap">
          <div>8:57 AM</div>
          <div>26/05/2020</div>
        </div>
      </div>
    </footer>
  );
}

// sliver of the neighbouring screen at the right edge
function EdgeStrip() {
  return (
    <div className="flex w-[5px] shrink-0 flex-col bg-white">
      <div className="h-[22px] bg-[repeating-linear-gradient(#7a5c70_0_2px,#6f9a8c_2px_4px,#8f7f9c_4px_5px)]" />
      <div className="h-[19px] bg-[#e4dada]" />
      <div className="h-[106px] border-b border-[#666] bg-[#f0f0f0]" />
      <svg viewBox="0 0 5 14" className="mt-[218px] h-3.5 w-[5px]"><path d="M0 0l5 6v7L0 5z" fill="#8b929a" /></svg>
      <div className="mt-1.5 h-8 bg-[repeating-linear-gradient(#f2b8c4_0_2px,#fff_2px_3px,#b8d8ee_3px_5px,#d4efc8_5px_6px)]" />
      <div className="flex-1" />
      <div className="h-[33px] border-t-4 border-[#999] bg-[#c8c8c8]" />
      <div className="h-[38px] bg-[repeating-linear-gradient(#4a5458_0_2px,#4c6a78_2px_4px,#5c5048_4px_5px)]" />
    </div>
  );
}

export default function App() {
  return (
    <div className="flex h-screen w-full overflow-hidden bg-[#f0f0f0] font-['Open_Sans',sans-serif] text-[#111]">
      <div className="relative flex min-w-0 flex-1 flex-col">
        <TitleBar />
        <MenuBar />
        <StandardBar />
        <RelationBar />
        <RibbonBar />
        <p className="h-[21px] shrink-0 border-y border-t-[#b4b4b4] border-b-[#666] pl-0.5 text-[11px] leading-5">
          Click for the second point of the line.
        </p>
        <main className="flex min-h-0 flex-1">
          <DrawTools />
          <ViewTools />
          <section className="flex min-w-0 flex-1 flex-col border-l border-[#666] bg-white">
            <div className="flex min-h-0 flex-1">
              <div className="min-w-0 flex-1 pt-px">
                <Drawing />
              </div>
              <div className="flex w-2.5 shrink-0 flex-col items-center bg-[#f0f0f0] pt-1.5">
                <svg viewBox="0 0 8 6" className="h-1.5 w-2"><path d="M1 5l3-3.5L7 5" fill="none" stroke="#444" strokeWidth="1.8" /></svg>
                <div className="mt-[240px] h-4 w-full bg-[#cdcdcd]" />
              </div>
            </div>
            <SheetTabs />
            <div className="h-px shrink-0 bg-[#f0f0f0]" />
          </section>
        </main>
        <Taskbar />
        <Recorder />
      </div>
      <EdgeStrip />
    </div>
  );
}
